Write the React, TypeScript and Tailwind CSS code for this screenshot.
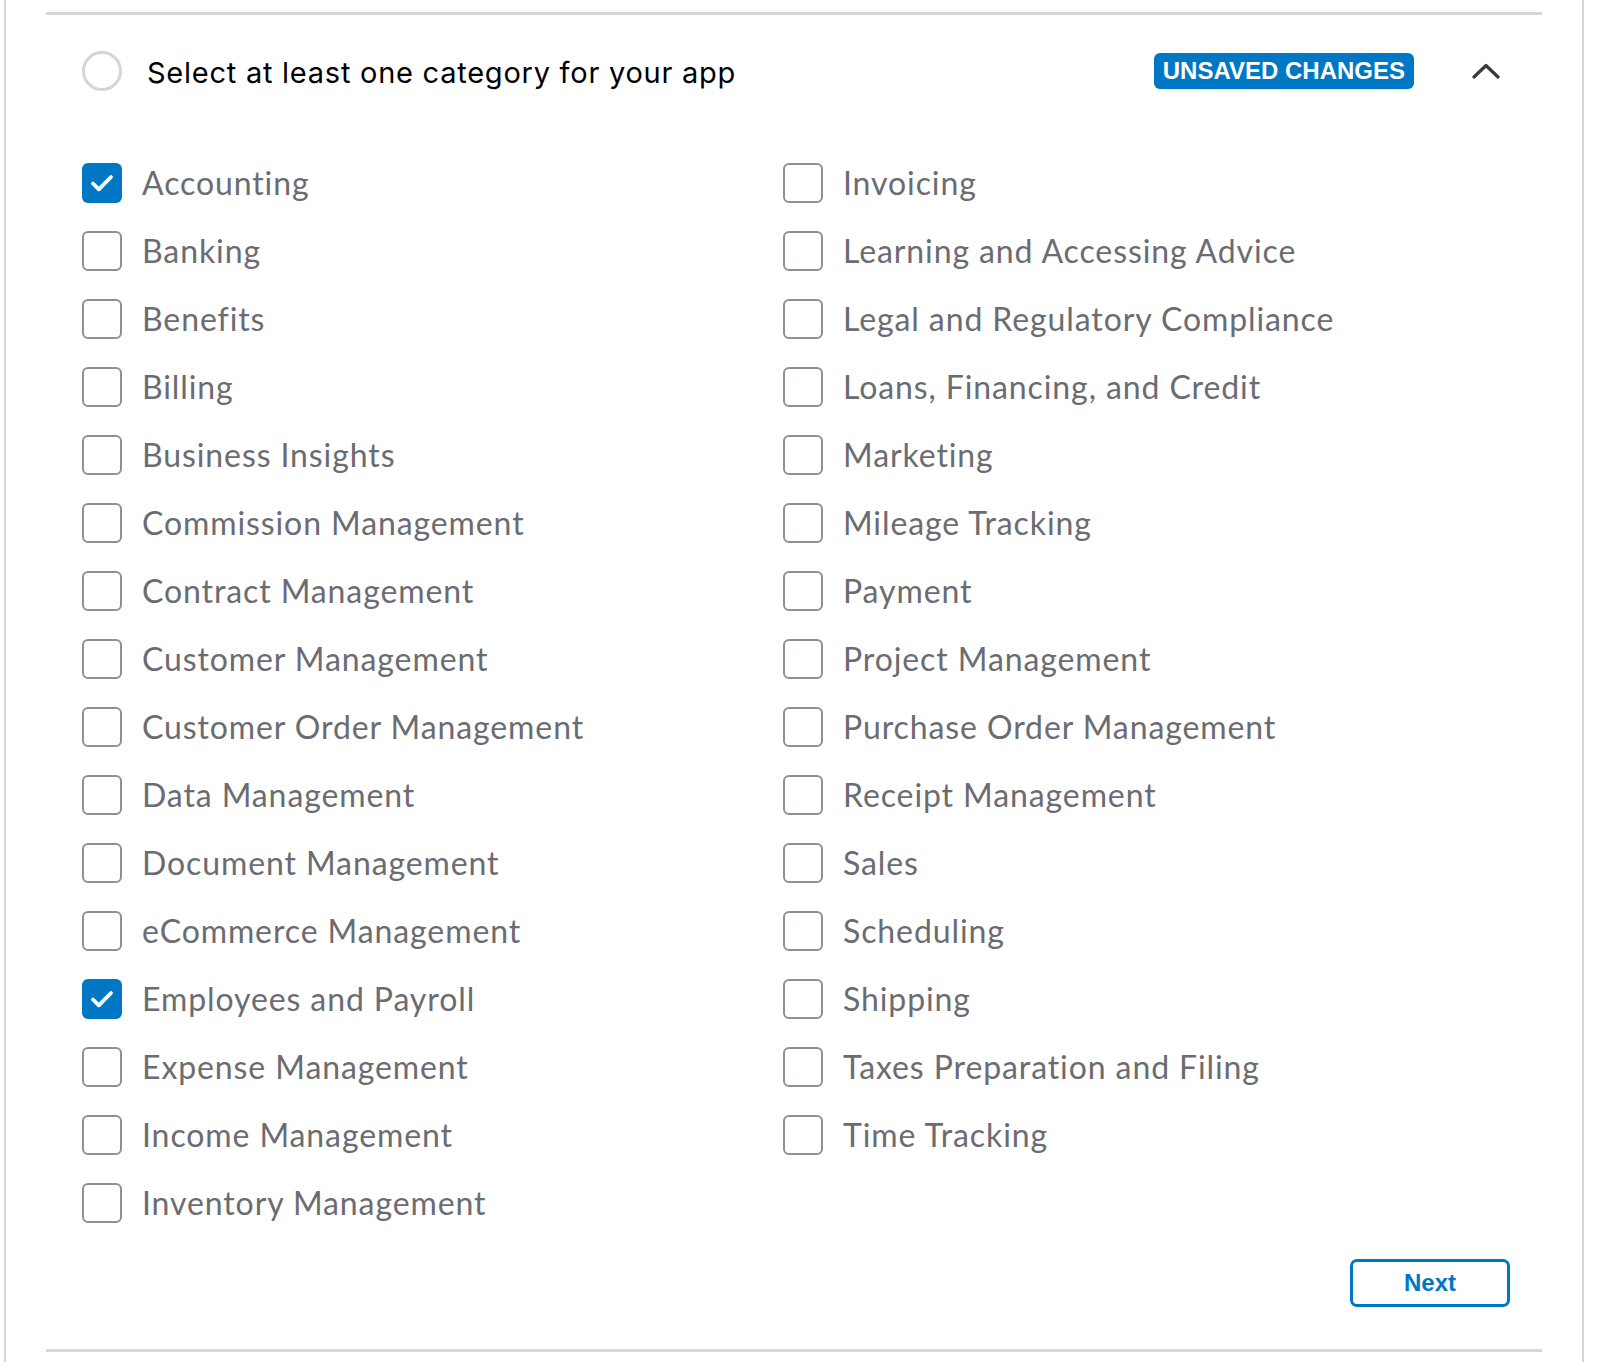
import { useState } from 'react';

const leftColumn = [
  'Accounting',
  'Banking',
  'Benefits',
  'Billing',
  'Business Insights',
  'Commission Management',
  'Contract Management',
  'Customer Management',
  'Customer Order Management',
  'Data Management',
  'Document Management',
  'eCommerce Management',
  'Employees and Payroll',
  'Expense Management',
  'Income Management',
  'Inventory Management',
];

const rightColumn = [
  'Invoicing',
  'Learning and Accessing Advice',
  'Legal and Regulatory Compliance',
  'Loans, Financing, and Credit',
  'Marketing',
  'Mileage Tracking',
  'Payment',
  'Project Management',
  'Purchase Order Management',
  'Receipt Management',
  'Sales',
  'Scheduling',
  'Shipping',
  'Taxes Preparation and Filing',
  'Time Tracking',
];

function CategoryCheckbox({
  label,
  checked,
  onToggle,
}: {
  label: string;
  checked: boolean;
  onToggle: () => void;
}) {
  return (
    <label className="flex h-[68px] cursor-pointer items-center" onClick={onToggle}>
      {checked ? (
        <span className="flex h-10 w-10 shrink-0 items-center justify-center rounded-[6px] bg-[#0077c5]">
          <svg width="24" height="20" viewBox="0 0 24 20" fill="none">
            <path d="M3 10.5l5.8 5.8L21 4" stroke="white" strokeWidth="3.8" strokeLinecap="round" strokeLinejoin="round" />
          </svg>
        </span>
      ) : (
        <span className="h-10 w-10 shrink-0 rounded-[6px] border-2 border-[#8d9096] bg-white" />
      )}
      <span className="ml-[20px] font-['Lato',sans-serif] text-[32px] tracking-[0.9px] text-[#6b6c72]">{label}</span>
    </label>
  );
}

export default function App() {
  const [selected, setSelected] = useState<string[]>(['Accounting', 'Employees and Payroll']);

  const toggle = (name: string) => {
    setSelected((prev) => (prev.includes(name) ? prev.filter((n) => n !== name) : [...prev, name]));
  };

  return (
    <div className="ml-[4px] min-h-[1362px] w-[1580px] border-x-2 border-[#d4d5d8] bg-white px-10 pt-[12px]">
      <div className="border-y-[3px] border-[#d6d7d9] pb-[42px] pl-[36px] pr-[32px] pt-[36px]">
        {/* Header */}
        <div className="flex h-10 items-center">
          <span className="h-10 w-10 rounded-full border-[3px] border-[#d4d5d8]" />
          <h2 className="ml-[25px] mt-[3px] font-['Inter',sans-serif] text-[29px] tracking-[0.75px] text-black">
            Select at least one category for your app
          </h2>
          <span className="ml-auto flex h-9 items-center rounded-[6px] bg-[#0077c5] px-[9px] font-['Liberation_Sans',Arial,sans-serif] text-[24px] font-bold text-white">
            UNSAVED CHANGES
          </span>
          <button className="ml-[58px] mr-[10px] flex h-10 w-7 items-center justify-center">
            <svg width="28" height="16" viewBox="0 0 28 16" fill="none">
              <path d="M2 14L14 2.5L26 14" stroke="#393a3d" strokeWidth="3.2" strokeLinecap="round" strokeLinejoin="round" />
            </svg>
          </button>
        </div>

        {/* Categories */}
        <div className="mt-[58px] grid grid-cols-[701px_1fr]">
          <div className="flex flex-col">
            {leftColumn.map((c) => (
              <CategoryCheckbox key={c} label={c} checked={selected.includes(c)} onToggle={() => toggle(c)} />
            ))}
          </div>
          <div className="flex flex-col">
            {rightColumn.map((c) => (
              <CategoryCheckbox key={c} label={c} checked={selected.includes(c)} onToggle={() => toggle(c)} />
            ))}
          </div>
        </div>

        <div className="mt-[22px] flex justify-end">
          <button className="h-12 w-40 rounded-[7px] border-[3px] border-[#0077c5] font-['Liberation_Sans',Arial,sans-serif] text-[24px] font-bold text-[#0077c5]">
            Next
          </button>
        </div>
      </div>
    </div>
  );
}
